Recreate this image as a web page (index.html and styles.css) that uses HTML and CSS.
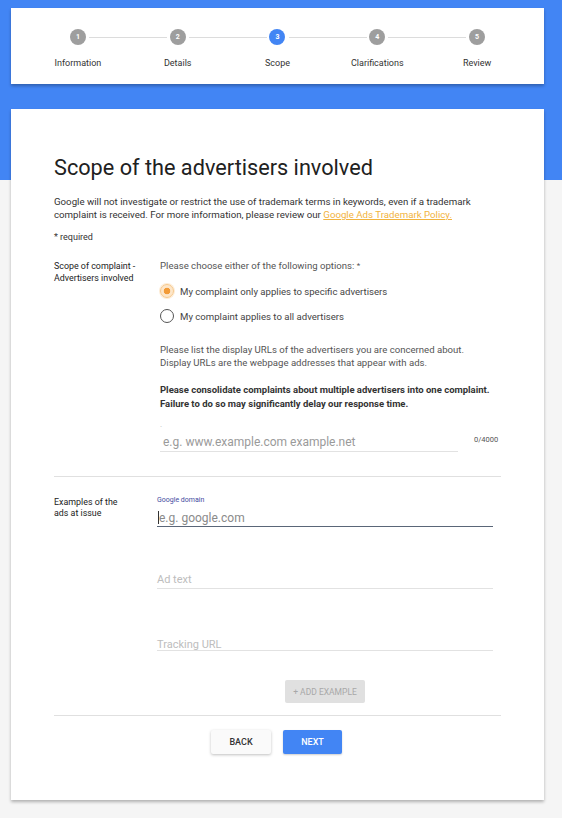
FILE: index.html
```html
<!DOCTYPE html>
<html>
<head>
<meta charset="utf-8">
<link rel="stylesheet" href="styles.css">
</head>
<body>
<div class="page">
  <div class="card stepper">
    <div class="step done"><div class="dot">1</div><div class="lbl">Information</div></div>
    <div class="step done"><div class="dot">2</div><div class="lbl">Details</div></div>
    <div class="step active"><div class="dot">3</div><div class="lbl">Scope</div></div>
    <div class="step"><div class="dot">4</div><div class="lbl">Clarifications</div></div>
    <div class="step last"><div class="dot">5</div><div class="lbl">Review</div></div>
  </div>

  <div class="card main">
    <h1 class="title">Scope of the advertisers involved</h1>
    <p class="intro">Google will not investigate or restrict the use of trademark terms in keywords, even if a trademark complaint is received. For more information, please review our <a class="link" href="#">Google Ads Trademark Policy.</a></p>
    <p class="req">* required</p>

    <div class="row first">
      <div class="label">Scope of complaint -<br>Advertisers involved</div>
      <div class="content">
        <div class="question">Please choose either of the following options: <span class="star">*</span></div>
        <div class="radio checked"><span class="circle"></span><span>My complaint only applies to specific advertisers</span></div>
        <div class="radio"><span class="circle"></span><span>My complaint applies to all advertisers</span></div>
        <p class="help">Please list the display URLs of the advertisers you are concerned about.<br>Display URLs are the webpage addresses that appear with ads.</p>
        <p class="bold">Please consolidate complaints about multiple advertisers into one complaint.<br>Failure to do so may significantly delay our response time.</p>
        <div class="dotmark">.</div>
        <div class="urlrow">
          <div class="field url"><span class="ph">e.g. www.example.com example.net</span></div>
          <div class="count">0/4000</div>
        </div>
      </div>
    </div>

    <div class="divider"></div>

    <div class="row second">
      <div class="label">Examples of the<br>ads at issue</div>
      <div class="content">
        <div class="flabel">Google domain</div>
        <div class="field focused"><span class="caret"></span><span class="ph dark">e.g. google.com</span></div>
        <div class="field plain f2"><span class="ph light">Ad text</span></div>
        <div class="field plain f3"><span class="ph light">Tracking URL</span></div>
        <div class="addwrap"><button class="add">+ ADD EXAMPLE</button></div>
      </div>
    </div>

    <div class="divider bottom"></div>

    <div class="actions">
      <button class="btn back">BACK</button>
      <button class="btn next">NEXT</button>
    </div>
  </div>
</div>
</body>
</html>
```

FILE: styles.css
```css
* { box-sizing: border-box; }
html, body { margin: 0; padding: 0; }
body {
  font-family: Roboto, "Noto Sans", Arial, sans-serif;
  background: #f5f5f5;
  width: 562px;
  height: 818px;
  overflow: hidden;
}
.page {
  background: linear-gradient(#4285f4 0, #4285f4 180px, #f5f5f5 180px);
  padding: 8px 0 18px 11px;
  min-height: 818px;
}
.card {
  width: 533px;
  background: #fff;
  box-shadow: 0 2px 3px rgba(0,0,0,0.28);
}
.stepper {
  height: 76px;
  display: flex;
  padding: 21px 17px 0 17px;
}
.step {
  width: 100px;
  display: flex;
  flex-direction: column;
  align-items: center;
  position: relative;
}
.step::after {
  content: "";
  position: absolute;
  top: 8px;
  left: 61px;
  width: 78px;
  height: 1px;
  background: #dcdcdc;
}
.step.last::after { display: none; }
.dot {
  width: 16px;
  height: 16px;
  border-radius: 50%;
  background: #9e9e9e;
  color: #fff;
  font-size: 7px;
  font-weight: 700;
  display: flex;
  align-items: center;
  justify-content: center;
}
.step.active .dot { background: #4285f4; }
.lbl {
  margin-top: 13px;
  font-size: 9px;
  color: #333;
  line-height: 11px;
}

.main {
  margin-top: 25px;
  height: 691px;
  padding: 45px 43px 0 43px;
}
.title {
  margin: 0;
  font-size: 21.7px;
  font-weight: 400;
  color: #212121;
  line-height: 28px;
}
.intro {
  margin: 13px 0 0 0;
  font-size: 9.7px;
  line-height: 13px;
  color: #333;
}
.link { color: #f2b33d; text-decoration: underline; }
.req {
  margin: 11px 0 0 0;
  font-size: 9px;
  line-height: 11px;
  color: #333;
}
.row { display: grid; }
.row.first { grid-template-columns: 106px 1fr; margin-top: 17px; }
.row.second { grid-template-columns: 103px 1fr; margin-top: 19px; }
.label {
  font-size: 8.9px;
  line-height: 12px;
  color: #222;
}
.row.second .label { line-height: 11px; margin-top: 1px; }
.content { font-size: 9.6px; color: #555; }
.question { line-height: 12px; }
.star { font-size: 8px; vertical-align: top; }
.radio {
  display: flex;
  align-items: center;
  gap: 6px;
  height: 14px;
  margin-top: 12px;
  color: #444;
}
.radio + .radio { margin-top: 11px; }
.circle {
  width: 14px;
  height: 14px;
  border-radius: 50%;
  border: 1.3px solid #555;
  flex: none;
  background: #fff;
}
.radio.checked .circle {
  border-color: #f6c78a;
  background: radial-gradient(circle, #f29b38 0, #f29b38 3px, #fde6c9 3.6px, #fde6c9 100%);
  box-shadow: 0 0 0 1px #fdecd6;
}
.help {
  margin: 20px 0 0 0;
  line-height: 13px;
  color: #555;
}
.bold {
  margin: 14px 0 0 0;
  font-size: 9.5px;
  line-height: 14px;
  font-weight: 700;
  color: #333;
}
.dotmark { height: 10px; line-height: 6px; margin-top: 11px; color: #bbb; font-size: 8px; }
.urlrow { display: flex; align-items: flex-start; }
.field {
  border-bottom: 1px solid #e2e2e2;
  height: 22px;
  display: flex;
  align-items: center;
}
.field.url { width: 298px; height: 20px; padding-left: 3px; }
.ph { font-size: 12px; color: #9a9a9a; }
.count { margin-left: 16px; font-size: 7.5px; color: #555; margin-top: 3px; }
.divider { height: 1px; background: #e0e0e0; margin-top: 24px; }
.flabel {
  font-size: 7px;
  color: #3f4aa0;
  line-height: 9px;
}
.field.focused {
  width: 336px;
  height: 18px;
  border-bottom: 1.5px solid #5a6678;
  margin-top: 4px;
}
.caret { width: 1px; height: 13px; background: #333; margin-left: 1px; }
.ph.dark { color: #8a8a8a; }
.ph.light { font-size: 11px; color: #bdbdbd; }
.field.plain { width: 336px; height: 16px; align-items: flex-start; }
.f2 { margin-top: 46px; }
.f3 { margin-top: 49px; height: 13px !important; }
.addwrap { margin-top: 29px; padding-left: 128px; }
.add {
  width: 80px;
  height: 23px;
  border: none;
  background: #e0e0e0;
  color: #a8a8a8;
  font-family: inherit;
  font-size: 8.5px;
  padding: 0;
  border-radius: 2px;
}
.divider.bottom { margin-top: 12px; }
.actions {
  display: flex;
  justify-content: center;
  gap: 12px;
  margin-top: 14px;
  padding-right: 2px;
}
.btn {
  width: 60px;
  height: 24px;
  border: none;
  font-family: inherit;
  font-size: 9px;
  font-weight: 500;
  border-radius: 2px;
  padding: 0;
}
.back { background: #fafafa; color: #333; box-shadow: 0 1px 3px rgba(0,0,0,0.25); }
.next { background: #4285f4; color: #fff; width: 59px; box-shadow: 0 1px 2px rgba(0,0,0,0.2); }
```
